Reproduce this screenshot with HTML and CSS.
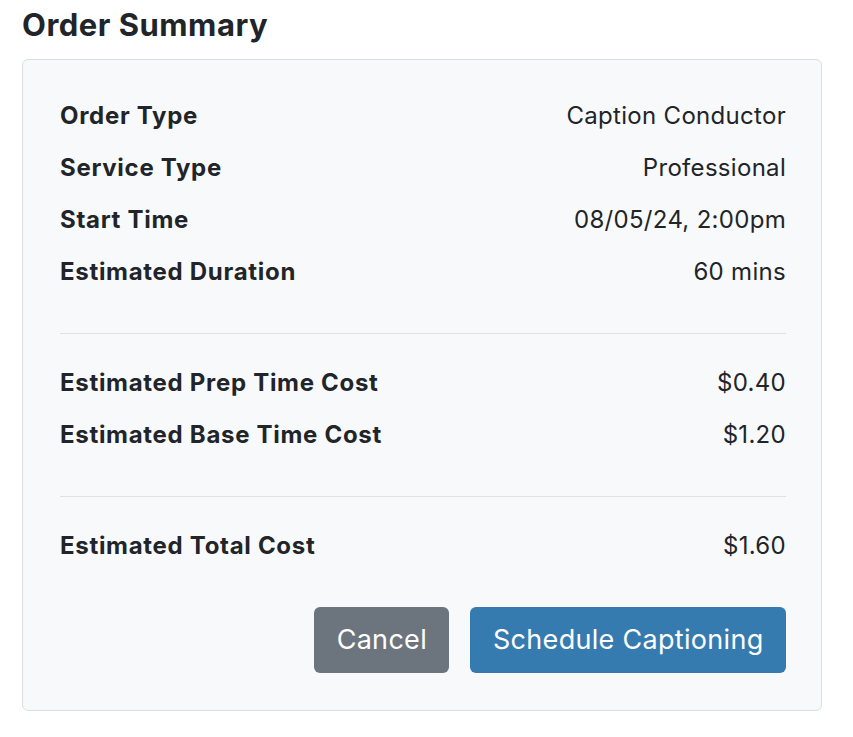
FILE: index.html
```html
<!DOCTYPE html>
<html>
<head>
<meta charset="utf-8">
<link rel="stylesheet" href="styles.css">
</head>
<body>
<h2 class="title">Order Summary</h2>
<div class="card">
  <div class="rows">
    <div class="row"><span class="label">Order Type</span><span class="value">Caption Conductor</span></div>
    <div class="row"><span class="label">Service Type</span><span class="value">Professional</span></div>
    <div class="row"><span class="label">Start Time</span><span class="value">08/05/24, 2:00pm</span></div>
    <div class="row"><span class="label">Estimated Duration</span><span class="value">60 mins</span></div>
  </div>
  <hr class="sep">
  <div class="rows">
    <div class="row"><span class="label">Estimated Prep Time Cost</span><span class="value">$0.40</span></div>
    <div class="row"><span class="label">Estimated Base Time Cost</span><span class="value">$1.20</span></div>
  </div>
  <hr class="sep">
  <div class="rows">
    <div class="row"><span class="label">Estimated Total Cost</span><span class="value">$1.60</span></div>
  </div>
  <div class="actions">
    <button class="btn btn-cancel">Cancel</button>
    <button class="btn btn-primary">Schedule Captioning</button>
  </div>
</div>
</body>
</html>
```
FILE: styles.css
```css
html, body {
  margin: 0;
  padding: 0;
  background: #ffffff;
}
body {
  font-family: Inter, "Noto Sans", sans-serif;
  color: #212529;
  padding: 0 31px 0 22px;
}
.title {
  margin: 5px 0 14px;
  font-size: 31px;
  font-weight: 700;
  line-height: 40px;
  letter-spacing: 0.5px;
}
.card {
  background: #f8f9fa;
  border: 1px solid #dcdfe2;
  border-radius: 6px;
  padding: 38px 35px 37px 37px;
}
.rows {
  display: flex;
  flex-direction: column;
  gap: 16px;
}
.row {
  display: flex;
  justify-content: space-between;
  font-size: 24px;
  line-height: 36px;
}
.label {
  font-weight: 700;
  letter-spacing: 0.7px;
}
.value {
  font-weight: 400;
  letter-spacing: 0.3px;
}
.sep {
  border: 0;
  border-top: 1px solid #dee2e6;
  margin: 43px 0 31px;
}
.actions {
  display: flex;
  justify-content: flex-end;
  gap: 21px;
  margin-top: 43px;
}
.btn {
  font-family: Inter, "Noto Sans", sans-serif;
  font-size: 27px;
  line-height: 36px;
  letter-spacing: 0.3px;
  color: #ffffff;
  border: 0;
  border-radius: 6px;
  padding: 15px 22.5px;
  height: 66px;
}
.btn-cancel {
  background: #6c757d;
}
.btn-primary {
  background: #367bb0;
}
```
